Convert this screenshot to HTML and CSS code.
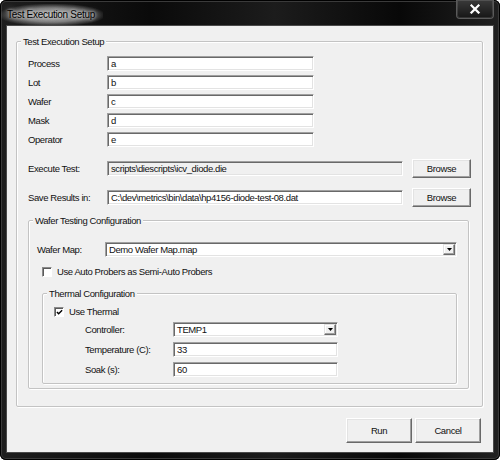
FILE: index.html
```html
<!DOCTYPE html>
<html>
<head>
<meta charset="utf-8">
<link rel="stylesheet" href="styles.css">
</head>
<body>
<div class="window">
  <div class="titlebar">
    <span class="title">Test Execution Setup</span>
    <div class="close">
      <svg width="12" height="10" viewBox="0 0 12 10"><path d="M2.5 1.5 L9.5 8.5 M9.5 1.5 L2.5 8.5" stroke="#2a2a2a" stroke-width="4" stroke-linecap="square"/><path d="M2.5 1.5 L9.5 8.5 M9.5 1.5 L2.5 8.5" stroke="#ffffff" stroke-width="2.2" stroke-linecap="square"/></svg>
    </div>
  </div>
  <div class="client">
    <fieldset class="group outer">
      <legend>Test Execution Setup</legend>
      <div class="fields">
        <span class="lbl">Process</span><div class="field">a</div>
        <span class="lbl">Lot</span><div class="field">b</div>
        <span class="lbl">Wafer</span><div class="field">c</div>
        <span class="lbl">Mask</span><div class="field">d</div>
        <span class="lbl">Operator</span><div class="field">e</div>
      </div>
      <div class="filerow first">
        <span class="lbl">Execute Test:</span>
        <div class="field path disabled">scripts\diescripts\icv_diode.die</div>
        <button class="btn browse">Browse</button>
      </div>
      <div class="filerow second">
        <span class="lbl">Save Results in:</span>
        <div class="field path">C:\dev\metrics\bin\data\hp4156-diode-test-08.dat</div>
        <button class="btn browse">Browse</button>
      </div>
      <fieldset class="group wafer">
        <legend>Wafer Testing Configuration</legend>
        <div class="maprow">
          <span class="lbl">Wafer Map:</span>
          <div class="field select wide"><span class="sel-text">Demo Wafer Map.map</span><span class="drop"><svg width="5" height="3" viewBox="0 0 5 3"><path d="M0 0 H5 L2.5 3 Z" fill="#000"/></svg></span></div>
        </div>
        <div class="check auto"><span class="box"></span><span>Use Auto Probers as Semi-Auto Probers</span></div>
        <fieldset class="group thermal">
          <legend>Thermal Configuration</legend>
          <div class="check use"><span class="box"><svg width="8" height="8" viewBox="0 0 8 8"><path d="M1 3.5 L3 5.5 L7 1.5" stroke="#000" stroke-width="1.6" fill="none"/></svg></span><span>Use Thermal</span></div>
          <div class="tgrid">
            <span class="lbl">Controller:</span>
            <div class="field select"><span class="sel-text">TEMP1</span><span class="drop"><svg width="5" height="3" viewBox="0 0 5 3"><path d="M0 0 H5 L2.5 3 Z" fill="#000"/></svg></span></div>
            <span class="lbl">Temperature (C):</span>
            <div class="field">33</div>
            <span class="lbl">Soak (s):</span>
            <div class="field">60</div>
          </div>
        </fieldset>
      </fieldset>
    </fieldset>
    <div class="buttons">
      <button class="btn big">Run</button>
      <button class="btn big">Cancel</button>
    </div>
  </div>
</div>
</body>
</html>
```
FILE: styles.css
```css
* { box-sizing: border-box; }
html, body { margin: 0; padding: 0; background: #ffffff; }
body {
  font-family: "Liberation Sans", Arial, sans-serif;
  font-size: 9.5px;
  letter-spacing: -0.4px;
  color: #111;
}
.window {
  width: 500px;
  height: 460px;
  border-radius: 6px;
  overflow: hidden;
  background: linear-gradient(90deg, #1e1e1e 0%, #0a0a0a 30%, #1c1c1c 55%, #080808 80%, #202020 100%);
  box-shadow: inset 0 0 0 1px #000, inset 0 0 0 2px #3a3a3a;
  display: flex;
  flex-direction: column;
}
.titlebar {
  height: 26px;
  flex: none;
  display: flex;
  justify-content: space-between;
  align-items: flex-start;
  padding: 0 6px 0 1px;
}
.title {
  margin-top: 4px;
  padding: 5px 8px 5px 6px;
  line-height: 12px;
  font-size: 10px;
  letter-spacing: -0.3px;
  color: #000;
  background: radial-gradient(ellipse at center, rgba(215,215,215,0.85) 0%, rgba(190,190,190,0.6) 45%, rgba(120,120,120,0) 75%);
  text-shadow: 0 0 3px #d8d8d8, 0 0 6px #c0c0c0;
}
.close {
  width: 38px;
  height: 19px;
  border: 1px solid #5a5a5a;
  border-top: none;
  border-radius: 0 0 4px 4px;
  background: linear-gradient(#3a3a3a, #161616);
  box-shadow: inset 0 0 0 1px rgba(255,255,255,0.12);
  display: flex;
  align-items: center;
  justify-content: center;
}
.client {
  margin-left: 7px;
  width: 486px;
  height: 426px;
  background: #f0f0f0;
  box-shadow: 0 0 0 1px #4a4a4a;
  padding: 9px 0 0 9px;
}
.group {
  margin: 0;
  padding: 0;
  min-width: 0;
  border: 1px solid #c3c3c3;
  border-radius: 2px;
  box-shadow: inset 1px 1px 0 #ffffff, 1px 1px 0 #ffffff;
}
.group legend {
  margin-left: 4px;
  padding: 0 2px;
  line-height: 13px;
  background: #f0f0f0;
}
.outer {
  width: 467px;
  padding-bottom: 17px;
}
.lbl { white-space: nowrap; }
.fields {
  display: grid;
  grid-template-columns: 79px 207px;
  row-gap: 4px;
  align-items: center;
  margin: 8px 0 0 11px;
}
.field {
  height: 15px;
  background: #fff;
  border: 1px solid;
  border-color: #a0a0a0 #ffffff #ffffff #a0a0a0;
  box-shadow: inset 1px 1px 0 #696969, inset -1px -1px 0 #e3e3e3;
  padding: 0 0 0 3px;
  line-height: 13px;
  white-space: nowrap;
  overflow: hidden;
}
.filerow {
  display: flex;
  align-items: center;
  margin-left: 11px;
}
.filerow .lbl { width: 79px; }
.filerow.first { margin-top: 12px; }
.filerow.second { margin-top: 10px; }
.field.path {
  width: 296px;
  height: 15px;
  margin-right: 9px;
}
.field.disabled { background: #f0f0f0; }
.btn {
  margin: 0;
  padding: 0;
  font: inherit;
  letter-spacing: inherit;
  color: #111;
  background: #f0f0f0;
  border: 1px solid;
  border-color: #ffffff #696969 #696969 #ffffff;
  box-shadow: inset -1px -1px 0 #a0a0a0, inset 1px 1px 0 #e3e3e3;
  border-radius: 0;
  display: flex;
  align-items: center;
  justify-content: center;
}
.btn.browse { width: 59px; height: 19px; }
.btn.big { width: 66px; height: 25px; }
.wafer {
  width: 441px;
  margin: 7px 0 0 11px;
  padding-bottom: 4px;
}
.maprow {
  display: flex;
  align-items: center;
  margin: 15px 0 0 8px;
}
.maprow .lbl { width: 68px; }
.select {
  display: flex;
  align-items: stretch;
  padding: 1px 1px 1px 3px;
  line-height: 11px;
}
.select.wide { width: 352px; }
.sel-text { flex: 1; }
.drop {
  width: 12px;
  flex: none;
  background: #f0f0f0;
  border: 1px solid;
  border-color: #e3e3e3 #696969 #696969 #e3e3e3;
  box-shadow: inset -1px -1px 0 #a0a0a0, inset 1px 1px 0 #ffffff;
  display: flex;
  align-items: center;
  justify-content: center;
}
.check {
  display: flex;
  align-items: center;
  gap: 5px;
  height: 10px;
  line-height: 10px;
}
.box {
  width: 10px;
  height: 10px;
  flex: none;
  background: #fff;
  border: 1px solid;
  border-color: #8a8a8a #ffffff #ffffff #8a8a8a;
  box-shadow: inset 1px 1px 0 #5a5a5a;
  display: flex;
  align-items: center;
  justify-content: center;
}
.box svg { width: 7px; height: 7px; }
.check.auto { margin: 10px 0 0 13px; }
.thermal {
  width: 415px;
  margin: 10px 0 0 13px;
  padding-bottom: 6px;
}
.check.use { margin: 7px 0 0 11px; }
.tgrid {
  display: grid;
  grid-template-columns: 88px 165px;
  row-gap: 5px;
  align-items: center;
  margin: 5px 0 0 42px;
}
.buttons {
  display: flex;
  justify-content: flex-end;
  gap: 3px;
  margin: 11px 12px 0 0;
}
```
